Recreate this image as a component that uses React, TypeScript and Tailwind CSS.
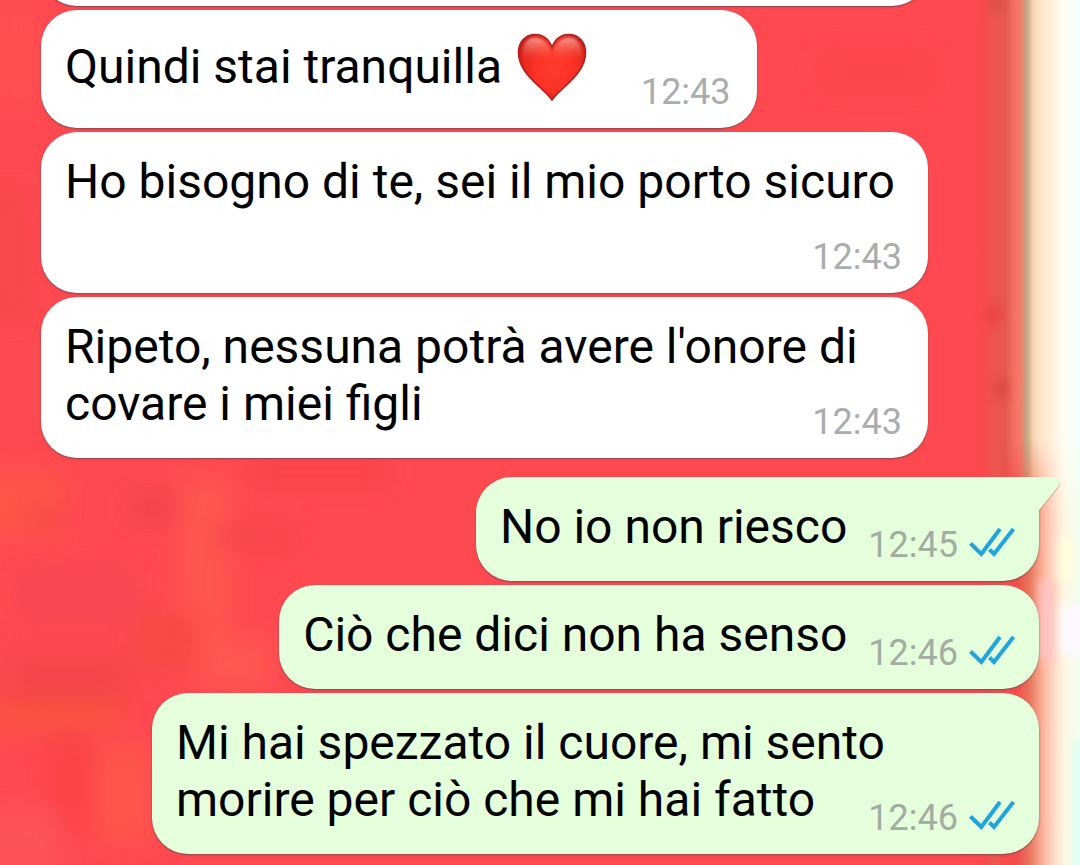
import React from "react";

type Message = {
  id: number;
  text: string;
  time: string;
  outgoing?: boolean;
  heart?: boolean;
  tail?: boolean;
};

const messages: Message[] = [
  { id: 1, text: "Quindi stai tranquilla ", time: "12:43", heart: true },
  { id: 2, text: "Ho bisogno di te, sei il mio porto sicuro", time: "12:43" },
  { id: 3, text: "Ripeto, nessuna potrà avere l'onore di covare i miei figli", time: "12:43" },
  { id: 4, text: "No io non riesco", time: "12:45", outgoing: true, tail: true },
  { id: 5, text: "Ciò che dici non ha senso", time: "12:46", outgoing: true },
  { id: 6, text: "Mi hai spezzato il cuore, mi sento morire per ciò che mi hai fatto", time: "12:46", outgoing: true },
];

function Wallpaper() {
  return (
    <svg className="absolute inset-0 h-full w-full" viewBox="0 0 1080 865" preserveAspectRatio="none" aria-hidden="true">
      <defs>
        <linearGradient id="edge" x1="960" x2="1080" y1="0" y2="0" gradientUnits="userSpaceOnUse">
          <stop offset="0" stopColor="#fd494f" stopOpacity="0" />
          <stop offset="0.2" stopColor="#fa4a4e" />
          <stop offset="0.28" stopColor="#ec544f" />
          <stop offset="0.38" stopColor="#e6594f" />
          <stop offset="0.45" stopColor="#f37063" />
          <stop offset="0.51" stopColor="#f87b6b" />
          <stop offset="0.535" stopColor="#c99a7c" />
          <stop offset="0.565" stopColor="#c8ab8a" />
          <stop offset="0.61" stopColor="#f6d3ae" />
          <stop offset="0.66" stopColor="#fee2c6" />
          <stop offset="0.76" stopColor="#fff0dc" />
          <stop offset="0.84" stopColor="#fffaf0" />
          <stop offset="0.92" stopColor="#fbfff8" />
          <stop offset="1" stopColor="#f0fffa" />
        </linearGradient>
        <linearGradient id="edgeLow" x1="1000" x2="1080" y1="0" y2="0" gradientUnits="userSpaceOnUse">
          <stop offset="0" stopColor="#fa4b4d" />
          <stop offset="0.22" stopColor="#f04f4b" />
          <stop offset="0.38" stopColor="#e87a60" />
          <stop offset="0.5" stopColor="#f8a48c" />
          <stop offset="0.58" stopColor="#fec0a8" />
          <stop offset="0.7" stopColor="#fee0cd" />
          <stop offset="0.8" stopColor="#fff6e2" />
          <stop offset="1" stopColor="#f0fff2" />
        </linearGradient>
        <linearGradient id="fade" x1="0" x2="0" y1="440" y2="510" gradientUnits="userSpaceOnUse">
          <stop offset="0" stopColor="#000" />
          <stop offset="1" stopColor="#fff" />
        </linearGradient>
        <mask id="low" maskUnits="userSpaceOnUse" x="1000" y="440" width="80" height="425">
          <rect x="1000" y="440" width="80" height="425" fill="url(#fade)" />
        </mask>
        <filter id="soft" x="-50%" y="-50%" width="200%" height="200%">
          <feGaussianBlur stdDeviation="12" />
        </filter>
        <filter id="softEdge" x="-200%" y="-20%" width="500%" height="140%">
          <feGaussianBlur stdDeviation="5" />
        </filter>
      </defs>
      <rect width="1080" height="865" fill="#ff4950" />
      <g filter="url(#soft)">
        <rect x="-10" y="10" width="50" height="90" fill="#ff5050" />
        <rect x="-10" y="190" width="40" height="130" fill="#f9474b" />
        <rect x="820" y="50" width="110" height="40" fill="#fc474c" />
        <rect x="-20" y="475" width="80" height="60" fill="#ff5648" />
        <rect x="180" y="480" width="50" height="170" fill="#ff5651" />
        <rect x="130" y="495" width="50" height="26" fill="#f0424a" />
        <rect x="20" y="505" width="40" height="20" fill="#f54645" />
        <rect x="250" y="462" width="140" height="20" fill="#f74247" />
        <rect x="215" y="525" width="80" height="24" fill="#f84548" />
        <rect x="20" y="570" width="110" height="50" fill="#f94653" />
        <rect x="140" y="610" width="60" height="60" fill="#fa4a45" />
        <rect x="200" y="640" width="70" height="50" fill="#ff5653" />
        <rect x="10" y="655" width="120" height="46" fill="#f54548" />
        <rect x="-10" y="700" width="130" height="30" fill="#fa5141" />
        <rect x="50" y="740" width="40" height="90" fill="#fa4245" />
        <rect x="100" y="750" width="50" height="90" fill="#ff564c" />
        <rect x="-20" y="810" width="80" height="60" fill="#fd5359" />
      </g>
      <rect x="960" width="120" height="865" fill="url(#edge)" />
      <rect x="1000" y="440" width="80" height="425" fill="url(#edgeLow)" mask="url(#low)" />
      <g filter="url(#softEdge)">
        <rect x="985" y="305" width="16" height="18" fill="#ee4243" />
        <rect x="994" y="380" width="14" height="18" fill="#e04a40" />
        <rect x="990" y="0" width="14" height="10" fill="#d94b45" />
        <rect x="1040" y="580" width="14" height="80" fill="#ffc4c4" />
        <rect x="1060" y="540" width="12" height="40" fill="#ffffd8" />
        <rect x="1060" y="605" width="24" height="50" fill="#fdf8ff" />
        <rect x="1074" y="740" width="20" height="135" fill="#dcfff2" />
      </g>
    </svg>
  );
}

function Heart() {
  return (
    <svg
      className="mt-0.5 mr-[34px] ml-[3px] inline-block h-[68px] w-[70px] align-[-18px]"
      viewBox="0 0 70 68"
      role="img"
      aria-label="cuore rosso"
    >
      <defs>
        <radialGradient id="heartFill" cx="37" cy="36" r="40" gradientUnits="userSpaceOnUse">
          <stop offset="0" stopColor="#ff3c2e" />
          <stop offset="0.5" stopColor="#fb3226" />
          <stop offset="0.78" stopColor="#e4261c" />
          <stop offset="1" stopColor="#c01a18" />
        </radialGradient>
        <linearGradient id="heartShine" x1="0" x2="0" y1="4" y2="27" gradientUnits="userSpaceOnUse">
          <stop offset="0" stopColor="#ffb4a8" stopOpacity="0.85" />
          <stop offset="1" stopColor="#ff6a5a" stopOpacity="0" />
        </linearGradient>
        <filter id="heartBlur" x="-20%" y="-20%" width="140%" height="140%">
          <feGaussianBlur stdDeviation="1.500" />
        </filter>
      </defs>
      <path
        d="M35 67C33.500 64.500 29 60 22 53.500C10 42.500 1.500 32.500 1.500 19.500C1.500 9 8.500 1.500 18 1.500C26 1.500 32 6 35 14.500C38 6 44 1.500 52 1.500C61.500 1.500 68.500 9 68.500 19.500C68.500 32.500 60 42.500 48 53.500C41 60 36.500 64.500 35 67Z"
        fill="url(#heartFill)"
        stroke="#b3201e"
        strokeWidth="1.600"
      />
      <g fill="url(#heartShine)" filter="url(#heartBlur)">
        <path d="M5 24C4 12 10 4.500 18 4.500C26 4.500 31.500 10 34 19V28H6Z" />
        <path d="M65 24C66 12 60 4.500 52 4.500C44 4.500 38.500 10 36 19V28H64Z" />
      </g>
    </svg>
  );
}

function ReadTicks() {
  return (
    <svg className="mb-[6px] h-[30px] w-[46px]" viewBox="0 0 46 30" fill="none" stroke="#21a4dc" strokeWidth="4" role="img" aria-label="Letto">
      <path d="M1.500 16.500L12.300 27L31 2" />
      <path d="M20.500 22.500L25 27L44.500 2" />
    </svg>
  );
}

function Tail() {
  return (
    <svg className="absolute top-0 left-full h-9 w-[22px]" viewBox="0 0 22 36" aria-hidden="true">
      <path d="M0 35L19.500 11C22.500 7 21 1.500 16 1.500H0Z" fill="#000" opacity="0.18" />
      <path d="M-1 0H16C21 0 22.500 5 19.500 9L0 33.500H-1Z" fill="#e5fedb" />
    </svg>
  );
}

function Bubble({ message }: { message: Message }) {
  const { text, time, outgoing, heart, tail } = message;
  return (
    <li
      className={`relative flow-root max-w-[887px] rounded-[36px] pt-[21px] pb-[15px] pl-6 shadow-[0_1px_2px_rgba(50,70,80,0.6)] ${
        outgoing ? "self-end bg-[#e5fedb] pr-6" : "self-start bg-white pr-[26px]"
      } ${tail ? "mt-[15px] rounded-tr-none" : ""}`}
    >
      {text}
      {heart && <Heart />}
      <span
        className={`float-right flex h-[42px] items-center gap-[11px] text-[36px] leading-[42px] ${
          heart ? "mt-10" : "mt-[26px]"
        } ${outgoing ? "ml-[21px] text-[#a3aca3]" : "ml-5 text-[#a9adae]"}`}
      >
        <time>{time}</time>
        {outgoing && <ReadTicks />}
      </span>
      {tail && <Tail />}
    </li>
  );
}

export default function App() {
  return (
    <main className="relative min-h-screen overflow-hidden bg-[#ff4950] font-['Roboto',sans-serif] text-black">
      <Wallpaper />
      <ul className="relative -mt-[66px] flex flex-col gap-1 px-[41px] pb-[11px] text-[48px] leading-[57px]">
        <li aria-hidden="true" className="h-18 w-full max-w-[887px] rounded-[36px] bg-white shadow-[0_1px_2px_rgba(50,70,80,0.6)]" />
        {messages.map((message) => (
          <Bubble key={message.id} message={message} />
        ))}
      </ul>
    </main>
  );
}
